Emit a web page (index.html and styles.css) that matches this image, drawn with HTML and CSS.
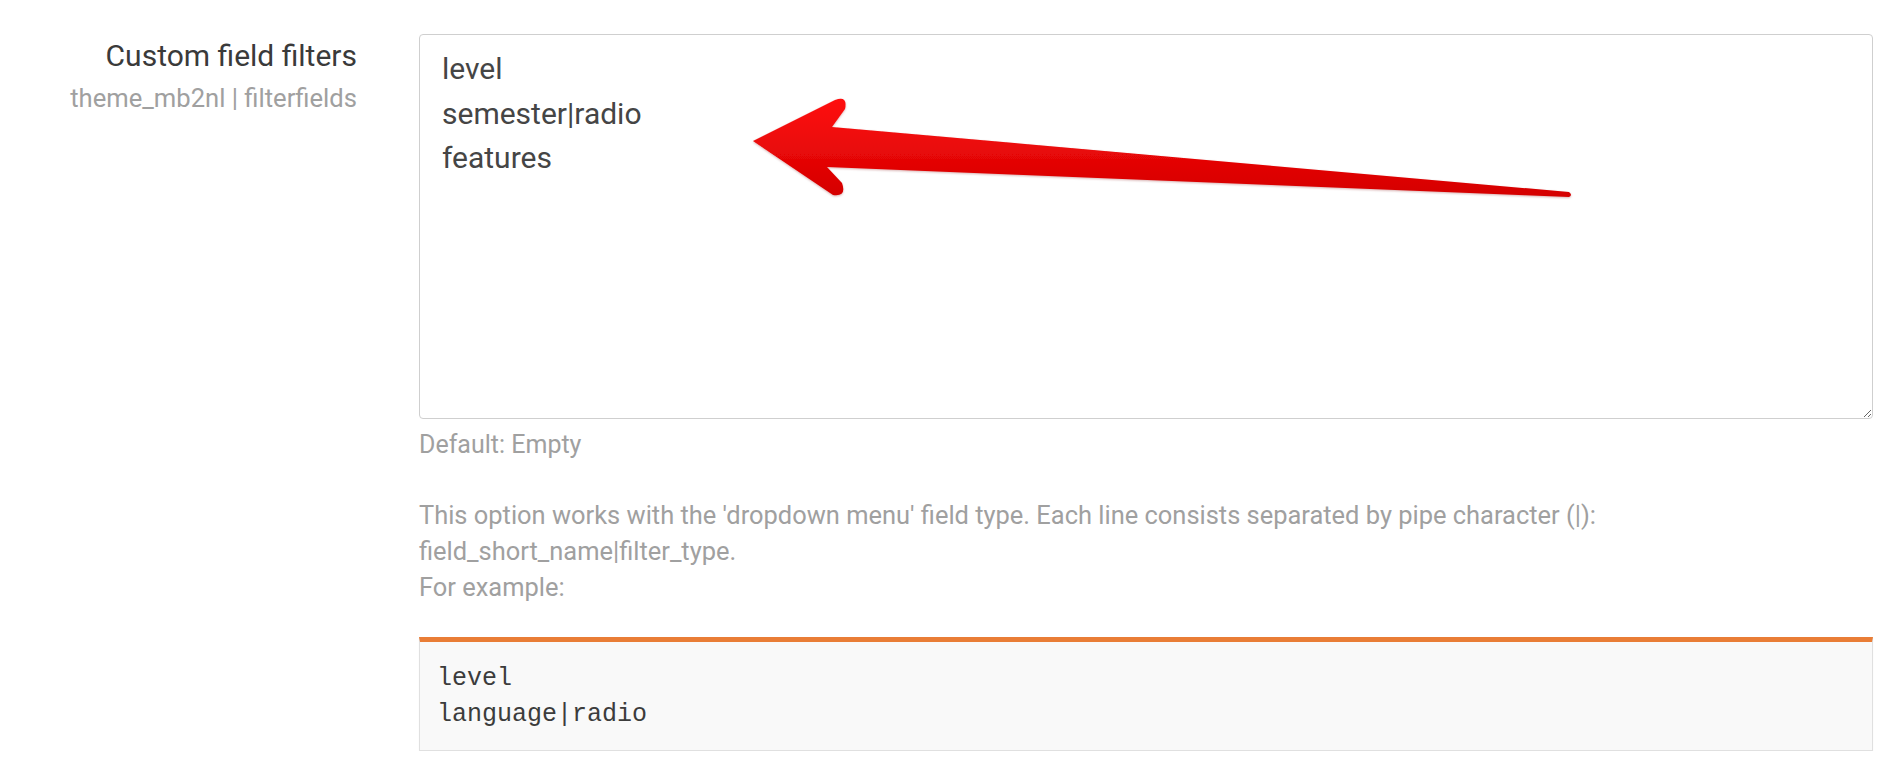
FILE: index.html
```html
<!DOCTYPE html>
<html lang="en">
<head>
  <meta charset="UTF-8">
  <meta name="viewport" content="width=device-width, initial-scale=1.0">
  <title>Custom field filters</title>
  <link rel="stylesheet" href="styles.css">
</head>
<body>
  <!-- Ajuste: filtros de campos personalizados -->
  <div class="setting">
    <div class="setting-label">
      <h3>Custom field filters</h3>
      <div class="setting-name">theme_mb2nl | filterfields</div>
    </div>

    <div class="setting-field">
      <textarea class="setting-input" spellcheck="false">level
semester|radio
features</textarea>
      <div class="setting-default">Default: Empty</div>

      <div class="setting-desc">
        This option works with the 'dropdown menu' field type. Each line consists separated by pipe character (|): field_short_name|filter_type.<br>
        For example:
      </div>

      <pre class="example">level
language|radio</pre>
    </div>
  </div>

  <!-- Flecha roja encima del textarea -->
  <svg class="arrow" width="840" height="112" viewBox="742 92 840 112">
    <defs>
      <linearGradient id="arrowFill" x1="0" y1="0" x2="0" y2="1">
        <stop offset="0" stop-color="#ff1010"/>
        <stop offset="1" stop-color="#d40000"/>
      </linearGradient>
      <filter id="arrowShadow" x="-5%" y="-20%" width="110%" height="140%">
        <feDropShadow dx="0" dy="1" stdDeviation="1.2" flood-color="#7a0000" flood-opacity="0.3"/>
      </filter>
    </defs>
    <path d="M753 141 L835 100 Q848 95 845 109 L832 127 L1569 192 Q1573 195 1569 197 L827 167 L842 183 Q847 197 833 195 Z"
          fill="url(#arrowFill)" filter="url(#arrowShadow)"/>
  </svg>
</body>
</html>
```

FILE: styles.css
```css
body {
  margin: 0;
  background: #fff;
  font-family: Roboto, "Liberation Sans", sans-serif;
  color: #373a3c;
  position: relative;
}
.setting {
  display: flex;
  gap: 62px;
  padding: 34px 21px 0 0;
}
.setting-label {
  width: 357px;
  flex: 0 0 357px;
  text-align: right;
  padding-top: 4px;
}
.setting-label h3 {
  margin: 0;
  font-size: 30px;
  line-height: 36px;
  font-weight: 400;
  color: #3a3a3a;
}
.setting-name {
  margin-top: 6px;
  font-size: 25.6px;
  line-height: 36px;
  color: #a0a0a0;
}
.setting-field {
  flex: 1;
  min-width: 0;
}
.setting-input {
  display: block;
  box-sizing: border-box;
  width: 100%;
  height: 385px;
  margin: 0;
  padding: 12px 22px;
  border: 1px solid #cfcfcf;
  border-radius: 4px;
  font-family: Roboto, "Liberation Sans", sans-serif;
  font-size: 30px;
  line-height: 44.5px;
  color: #454545;
  background: #fff;
  outline: none;
}
.setting-default {
  margin-top: 7.5px;
  font-size: 25px;
  line-height: 36px;
  color: #a0a0a0;
}
.setting-desc {
  margin-top: 34px;
  font-size: 25.45px;
  line-height: 36px;
  color: #a0a0a0;
}
.example {
  margin: 32.5px 0 0;
  padding: 19px 17px 17px;
  background: #f9f9f9;
  border: 1px solid #e0e0e0;
  border-top: 5px solid #e97d36;
  font-family: "Liberation Mono", monospace;
  font-size: 25px;
  line-height: 36px;
  color: #3c3c3c;
  box-shadow: 0 1px 1px rgba(0, 0, 0, 0.06);
}
.arrow {
  position: absolute;
  left: 742px;
  top: 92px;
  pointer-events: none;
}
```
